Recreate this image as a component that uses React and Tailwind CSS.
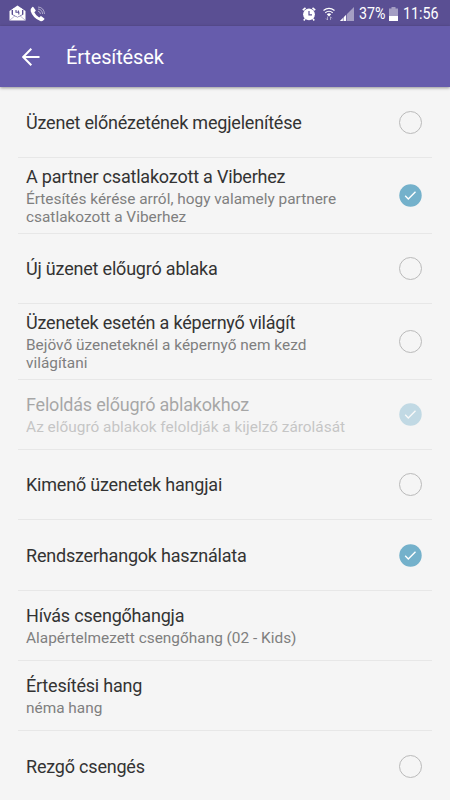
import React from "react";

const settings = [
  { title: "Üzenet előnézetének megjelenítése", checked: false, height: "h-[71px]" },
  {
    title: "A partner csatlakozott a Viberhez",
    lines: ["Értesítés kérése arról, hogy valamely partnere", "csatlakozott a Viberhez"],
    checked: true,
    height: "h-[76px]",
  },
  { title: "Új üzenet előugró ablaka", checked: false, height: "h-[70px]" },
  {
    title: "Üzenetek esetén a képernyő világít",
    lines: ["Bejövő üzeneteknél a képernyő nem kezd", "világítani"],
    checked: false,
    height: "h-[76px]",
  },
  {
    title: "Feloldás előugró ablakokhoz",
    lines: ["Az előugró ablakok feloldják a kijelző zárolását"],
    checked: true,
    disabled: true,
    height: "h-[70px]",
  },
  { title: "Kimenő üzenetek hangjai", checked: false, height: "h-[70px]" },
  { title: "Rendszerhangok használata", checked: true, height: "h-[71px]" },
  {
    title: "Hívás csengőhangja",
    lines: ["Alapértelmezett csengőhang (02 - Kids)"],
    height: "h-[70px]",
  },
  { title: "Értesítési hang", lines: ["néma hang"], height: "h-[70px]" },
  { title: "Rezgő csengés", checked: false, height: "h-[70px]" },
];

function StatusBar() {
  return (
    <div className="flex h-[26px] shrink-0 items-center bg-[#5a4f93] pl-[9px] pr-3 pt-px text-white">
      <svg width="17" height="17" viewBox="0 0 17 17">
        <path d="M0.5 6 L8.5 0.5 L16.5 6 V15.5 H0.5 Z" fill="#fff" />
        <path d="M2.6 5 H14.4 V9.4 L8.5 12.6 L2.6 9.4 Z" fill="#5a4f93" />
        <path d="M4 3.4 H13 V9.5 L8.5 11.9 L4 9.5 Z" fill="#fff" />
        <path d="M7 5 V7.2 H9.8 V9.6 M9.4 5.6 V7" stroke="#5a4f93" strokeWidth="1.1" fill="none" />
        <path d="M1 15 L6 10.8 M16 15 L11 10.8" stroke="#5a4f93" strokeWidth="0.4" />
      </svg>
      <svg width="16" height="16" viewBox="0 0 16 16" className="ml-1">
        <path
          d="M3.3 1 L5.7 4.2 Q6 4.8 5.4 5.3 L4.3 6.3 Q5.8 9.7 9.2 11.6 L10.3 10.4 Q10.8 9.9 11.4 10.3 L14.3 12.5 Q14.7 13 14.2 13.5 Q12.6 15.7 10.3 15 Q3 12.3 0.7 5.3 Q0 2.8 2.3 1 Q2.8 0.5 3.3 1 Z"
          fill="#fff"
        />
        <path
          d="M8 5.2 Q10.3 5.5 10.5 8 M8 3 Q12.2 3.4 12.6 8 M8 1 Q14 1.5 14.5 8"
          stroke="#fff"
          strokeOpacity="0.5"
          fill="none"
        />
      </svg>
      <div className="ml-auto flex items-center">
        <svg width="14" height="14" viewBox="0 0 14 14">
          <circle cx="7" cy="7.3" r="5.9" fill="#fff" />
          <path d="M0.8 3.2 L3.5 0.8 M13.2 3.2 L10.5 0.8 M3 11.8 L1.8 13.4 M11 11.8 L12.2 13.4" stroke="#fff" strokeWidth="1.6" />
          <path d="M7 4 V7.8 H10" stroke="#5a4f93" strokeWidth="1.2" fill="none" />
        </svg>
        <svg width="12" height="14" viewBox="0 0 12 14" className="ml-[7px]">
          <path d="M0.5 3.5 Q6 -0.8 11.5 3.5 M2.3 5.7 Q6 2.8 9.7 5.7" stroke="#fff" strokeWidth="1.2" fill="none" />
          <path d="M3.8 7.3 Q6 5.3 8.2 7.3 L6 9.6 Z" fill="#fff" />
          <path d="M4.5 9.5 V13 M3 11.5 L4.5 13 M7.5 13 V9.8 M7.5 9.8 L9 11.3" stroke="#fff" strokeOpacity="0.45" fill="none" />
        </svg>
        <svg width="14" height="14" viewBox="0 0 14 14" className="ml-[5px]">
          <path d="M0 14 L14 0 V14 Z" fill="#fff" fillOpacity="0.45" />
          <path d="M0 14 L6 8 V14 Z" fill="#fff" />
          <path d="M3.3 9 V14 M6.5 6 V14" stroke="#5a4f93" strokeWidth="0.6" />
        </svg>
        <span className="ml-[5px] w-[27px] origin-left scale-x-[0.89] whitespace-nowrap text-[16px] leading-none">37%</span>
        <svg width="9" height="14" viewBox="0 0 9 14" className="ml-[3px]">
          <path d="M2.5 0 H6.5 V1.5 H9 V9 H0 V1.5 H2.5 Z" fill="#fff" fillOpacity="0.45" />
          <path d="M0 9 H9 V14 H0 Z" fill="#fff" />
        </svg>
        <span className="ml-[5px] w-[35px] origin-left scale-x-[0.89] whitespace-nowrap text-[16px] leading-none">11:56</span>
      </div>
    </div>
  );
}

function Toggle({ checked }) {
  if (!checked) {
    return <span className="size-[23px] shrink-0 rounded-full border-[1.5px] border-[#bababa]" />;
  }
  return (
    <svg width="23" height="23" viewBox="0 0 23 23" className="shrink-0">
      <circle cx="11.5" cy="11.5" r="11.2" fill="#74b1cb" />
      <path d="M6.2 11.8 L9.3 14.9 L16.5 7.7" stroke="#fff" strokeWidth="1.4" fill="none" />
    </svg>
  );
}

function SettingRow({ item, last }) {
  return (
    <div
      className={`mx-[18px] flex shrink-0 items-center justify-between pl-2 pr-[10px] ${item.height} ${
        last ? "" : "border-b border-[#e7e7e7]"
      } `}
    >
      <div className={`pt-px ${item.disabled ? "opacity-40" : ""}`}>
        <div className="text-[18px] leading-[22px] tracking-[-0.2px] whitespace-nowrap text-[#333]">
          {item.title}
        </div>
        {item.lines && (
          <div className="pt-0.5 text-[15.4px] leading-[18px] whitespace-nowrap text-[#7f7f7f]">
            {item.lines.map((line) => (
              <div key={line}>{line}</div>
            ))}
          </div>
        )}
      </div>
      {item.checked !== undefined && (
        <div className={`flex ${item.disabled ? "opacity-40" : ""}`}>
          <Toggle checked={item.checked} />
        </div>
      )}
    </div>
  );
}

function App() {
  return (
    <div className="flex h-[800px] w-[450px] flex-col overflow-hidden bg-[#f5f5f5] font-[Roboto,sans-serif]">
      <StatusBar />
      <header className="z-10 flex h-[61px] shrink-0 items-center bg-[#665cac] pl-[22px] text-white shadow-[0_1px_3px_rgba(0,0,0,0.4)]">
        <svg width="18" height="18" viewBox="0 0 18 18">
          <path d="M9.3 0.8 L1.2 9 L9.3 17.2 M1.2 9 H17.5" stroke="#fff" strokeWidth="2" fill="none" />
        </svg>
        <h1 className="ml-[26px] pt-px text-[20px] leading-6 tracking-[-0.15px]">Értesítések</h1>
      </header>
      <main className="flex flex-col">
        {settings.map((item, i) => (
          <SettingRow key={item.title} item={item} last={i === settings.length - 1} />
        ))}
      </main>
    </div>
  );
}

export default App;
